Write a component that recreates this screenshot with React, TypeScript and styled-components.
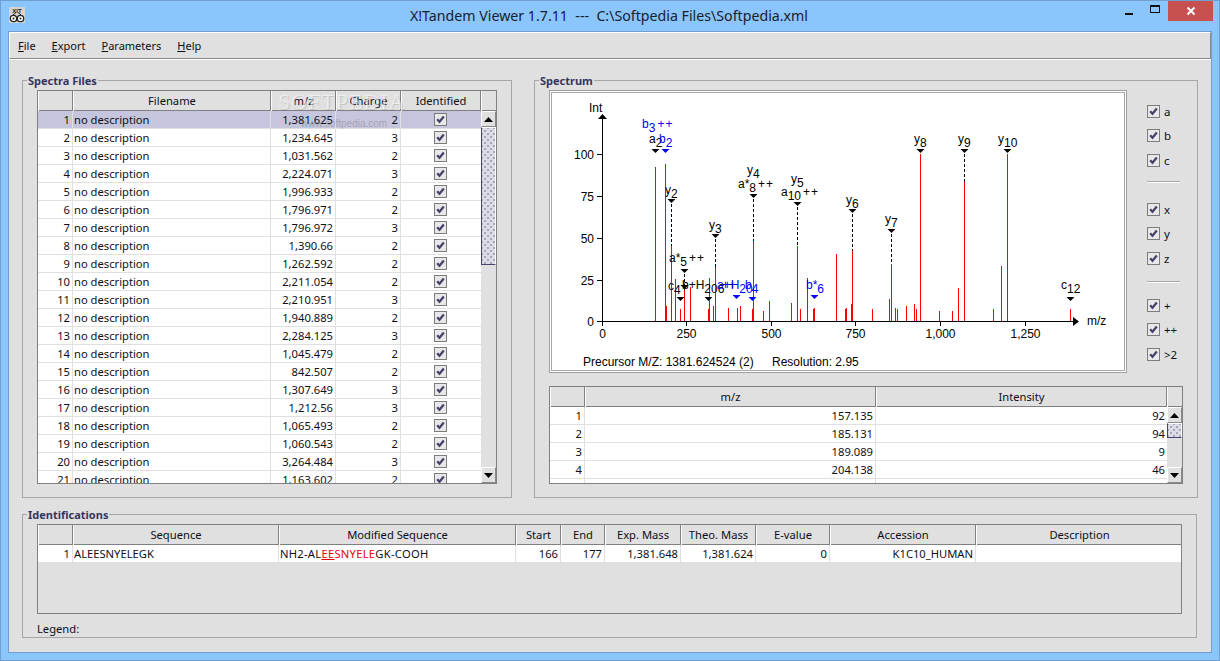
import styled, { createGlobalStyle } from "styled-components"

const GlobalStyle = createGlobalStyle`
  html, body {
    margin: 0;
    padding: 0;
    background: #8ac5fb;
    overflow: hidden;
  }
  * { box-sizing: border-box; }
`

const UI_FONT = `"Noto Sans", "Liberation Sans", sans-serif`
const CHART_FONT = `"Liberation Sans", Arial, sans-serif`

const Window = styled.div`
  width: 1220px;
  height: 661px;
  display: flex;
  flex-direction: column;
  background: #8ac5fb;
  border: 1px solid #6f9fd0;
  font-family: ${UI_FONT};
  font-size: 11.2px;
  color: #0e0e18;
`

const TitleBar = styled.div`
  height: 30px;
  flex: none;
  position: relative;
  display: flex;
  align-items: flex-start;
  justify-content: space-between;
  padding-left: 8px;
`

const AppIcon = styled.svg`
  width: 16px;
  height: 16px;
  margin-top: 6px;
`

const TitleText = styled.div`
  position: absolute;
  left: 0;
  right: 2px;
  top: 5px;
  text-align: center;
  font-size: 14.2px;
  line-height: 20px;
  color: #16222e;
  white-space: pre;
`

const WindowButtons = styled.div`
  display: flex;
  margin-right: 6px;
`

const WinButton = styled.div<{ $close?: boolean }>`
  width: ${({ $close }) => ($close ? "45px" : "26px")};
  height: 20px;
  display: flex;
  align-items: center;
  justify-content: center;
  background: ${({ $close }) => ($close ? "#c75050" : "transparent")};
`

const Client = styled.div`
  flex: 1;
  margin: 0 7px 7px 7px;
  display: flex;
  flex-direction: column;
  background: #e0e0e0;
  border: 1px solid #6f9fd0;
`

const MenuBar = styled.div`
  height: 27px;
  flex: none;
  display: flex;
  align-items: center;
  padding-left: 8px;
  gap: 16px;
  border-top: 1px solid #fff;
  border-left: 1px solid #fff;
  border-bottom: 1px solid #8a8a8a;
  border-right: 1px solid #8a8a8a;
  box-shadow: 0 1px 0 #fff;
  font-size: 11px;
  color: #0e0e18;

  u { text-underline-offset: 1px; }
`

const Content = styled.div`
  flex: 1;
  display: flex;
  flex-direction: column;
  gap: 16px;
  padding: 21px 14px 0 13px;
`

const TopRow = styled.div`
  display: flex;
  gap: 22px;
  height: 418px;
`

const Panel = styled.section<{ $width?: number }>`
  position: relative;
  ${({ $width }) => ($width ? `width: ${$width}px;` : "")}
  border: 1px solid #a6a6a6;
  padding: 9px 14px 0 14px;
`

const PanelTitle = styled.h2`
  position: absolute;
  left: 4px;
  top: -8px;
  margin: 0;
  padding: 0 1px;
  background: #e0e0e0;
  font-size: 11px;
  line-height: 15px;
  font-weight: 700;
  color: #35355f;
`

const TableFrame = styled.div<{ $height: number }>`
  position: relative;
  height: ${({ $height }) => $height}px;
  border: 1px solid #808080;
  overflow: hidden;
  display: flex;
  flex-direction: column;
`

const HeaderRow = styled.div<{ $cols: string }>`
  flex: none;
  height: 20px;
  display: grid;
  grid-template-columns: ${({ $cols }) => $cols};
  border-bottom: 1px solid #808080;
`

const HeaderCell = styled.div`
  text-align: center;
  line-height: 20px;
  white-space: nowrap;
  border-left: 1px solid #fff;
  border-right: 1px solid #808080;

  &:last-child { border-right: none; }
`

const TableBody = styled.div`
  flex: 1;
  min-height: 0;
  display: flex;
`

const Rows = styled.div`
  flex: 1;
  min-width: 0;
  overflow: hidden;
`

const Row = styled.div<{ $cols: string; $selected?: boolean }>`
  height: 18px;
  display: grid;
  grid-template-columns: ${({ $cols }) => $cols};
  background: ${({ $selected }) => ($selected ? "#c5c5dd" : "#fff")};
  border-bottom: 1px solid #e0e0e0;
`

const Cell = styled.div<{ $align?: string }>`
  padding: 0 2px 0 1px;
  line-height: 17px;
  white-space: nowrap;
  overflow: hidden;
  text-align: ${({ $align }) => $align || "right"};
  border-right: 1px solid #e0e0e0;
  display: ${({ $align }) => ($align === "center" ? "flex" : "block")};
  justify-content: center;
  align-items: center;

  &:last-child { border-right: none; }
`

const CheckCell = styled(Cell)`
  padding: 0 2px 0 0;
`

const SequenceCell = styled(Cell)`
  letter-spacing: 0.27px;
`

const ScrollBar = styled.div`
  width: 15px;
  flex: none;
  display: flex;
  flex-direction: column;
  background: #e0e0e0;
`

const ScrollArrow = styled.div`
  height: 16px;
  flex: none;
  display: flex;
  align-items: center;
  justify-content: center;
  border-top: 1px solid #fff;
  border-left: 1px solid #fff;
  border-right: 1px solid #8a8a8a;
  border-bottom: 1px solid #8a8a8a;
`

const ScrollThumb = styled.div<{ $height: number }>`
  height: ${({ $height }) => $height}px;
  flex: none;
  border-left: 1px solid #44446e;
  border-bottom: 1px solid #44446e;
  border-top: 1px solid #fff;
  border-right: 1px solid #fff;
  background-color: #dcdce6;
  background-image:
    radial-gradient(circle, #6a6a88 0.6px, transparent 0.8px),
    radial-gradient(circle, #6a6a88 0.6px, transparent 0.8px);
  background-size: 6px 6px;
  background-position: 0 0, 3px 3px;
`

const ScrollSpace = styled.div`
  flex: 1;
`

const CheckBox = styled.span`
  width: 13px;
  height: 13px;
  flex: none;
  display: inline-flex;
  align-items: center;
  justify-content: center;
  background: #e8e8e8;
  border: 1px solid #7c7c7c;
`

const Watermark = styled.div`
  position: absolute;
  left: 240px;
  top: 1px;
  font-family: "Liberation Serif", serif;
  font-size: 22px;
  line-height: 20px;
  letter-spacing: 1px;
  color: rgba(255, 255, 255, 0.5);
  text-shadow: 1px 1px 0 rgba(130, 130, 130, 0.3);
  pointer-events: none;
`

const WatermarkUrl = styled.div`
  position: absolute;
  left: 263px;
  top: 27px;
  font-family: ${CHART_FONT};
  font-size: 10px;
  line-height: 12px;
  color: rgba(120, 120, 120, 0.45);
  pointer-events: none;
`

const SpectrumColumn = styled.div`
  display: flex;
  flex-direction: column;
  gap: 13px;
`

const ChartRow = styled.div`
  display: flex;
  gap: 20px;
`

const ChartBox = styled.div`
  width: 578px;
  height: 283px;
  flex: none;
  background: #fff;
  border: 1px solid #a0a0a0;
  box-shadow: inset 0 0 0 1px #fff, inset 0 0 0 2px #a8a8a8;
`

const ChartSvg = styled.svg`
  display: block;
  width: 576px;
  height: 281px;
`

const ChartText = styled.text<{ $color?: string; $anchor?: string }>`
  font-family: ${CHART_FONT};
  font-size: 12px;
  fill: ${({ $color }) => $color || "#000"};
  text-anchor: ${({ $anchor }) => $anchor || "start"};
`

const Options = styled.div`
  display: flex;
  flex-direction: column;
  width: 33px;
  padding-top: 9px;
`

const Option = styled.label`
  height: 24.5px;
  display: flex;
  align-items: center;
  gap: 4px;
  font-size: 11.5px;
`

const OptionRule = styled.div<{ $above: number; $below: number }>`
  height: 2px;
  margin: ${({ $above, $below }) => `${$above}px 0 ${$below}px`};
  border-top: 1px solid #a8a8a8;
  border-bottom: 1px solid #fff;
`

const SeqRed = styled.span`
  color: #e8000c;
`

const SeqFixed = styled.span`
  color: #e8000c;
  text-decoration: underline;
`

const LegendLine = styled.div`
  margin-top: 7px;
  line-height: 16px;
`

const IdBody = styled.div`
  flex: 1;
  background: #e0e0e0;
`

const Check = () => (
  <CheckBox>
    <svg width="9" height="9" viewBox="0 0 9 9">
      <path d="M1.2 4.2 L3.5 6.8 L7.8 1.6" fill="none" stroke="#43436b" strokeWidth="2.3" />
    </svg>
  </CheckBox>
)

const Arrow = ({ up }: { up?: boolean }) => (
  <ScrollArrow>
    <svg width="9" height="5" viewBox="0 0 9 5">
      <path d={up ? "M0 5 L4.5 0 L9 5 Z" : "M0 0 L4.5 5 L9 0 Z"} fill="#000" />
    </svg>
  </ScrollArrow>
)

const spectra: [string, number][] = [
  ["1,381.625", 2], ["1,234.645", 3], ["1,031.562", 2], ["2,224.071", 3], ["1,996.933", 2],
  ["1,796.971", 2], ["1,796.972", 3], ["1,390.66", 2], ["1,262.592", 2], ["2,211.054", 2],
  ["2,210.951", 3], ["1,940.889", 2], ["2,284.125", 3], ["1,045.479", 2], ["842.507", 2],
  ["1,307.649", 3], ["1,212.56", 3], ["1,065.493", 2], ["1,060.543", 2], ["3,264.484", 3],
  ["1,163.602", 2],
]

const peaksList: [string, string][] = [
  ["157.135", "92"], ["185.131", "94"], ["189.089", "9"], ["204.138", "46"], ["", ""],
]

const idHeaders = ["", "Sequence", "Modified Sequence", "Start", "End", "Exp. Mass", "Theo. Mass", "E-value", "Accession", "Description"]

// x, top of the red peak (page coordinates, the axis is at y=321)
const peaks: [number, number][] = [
  [655, 167], [665, 164], [666, 306], [671, 246], [675, 279], [680, 309], [684, 290], [690, 287],
  [708, 309], [709, 309], [713, 306], [709, 278], [715, 267], [728, 308], [737, 308], [740, 306],
  [752, 309], [753, 241], [763, 311], [769, 301], [791, 303], [797, 246], [800, 309], [807, 278],
  [813, 309], [814, 308], [836, 254], [845, 309], [846, 308], [851, 304], [852, 251], [872, 309],
  [889, 299], [891, 264], [895, 308], [897, 309], [906, 306], [914, 304], [916, 309], [920, 154],
  [939, 311], [952, 311], [958, 288], [964, 182], [993, 309], [1001, 266], [1007, 154], [1070, 309],
]

const dashes: [number, number, number][] = [
  [671, 204, 246], [684, 274, 290], [715, 239, 267], [753, 199, 241], [797, 207, 246],
  [852, 214, 251], [891, 234, 264], [964, 154, 182],
]

const BLUE = "#0000ff"

const markers: [number, number, string?][] = [
  [655, 151], [665, 151, BLUE], [671, 201], [684, 271], [684, 287], [680, 299], [708, 299],
  [715, 236], [736, 297, BLUE], [752, 299, BLUE], [753, 196], [797, 204], [814, 297, BLUE],
  [852, 211], [891, 231], [920, 151], [964, 151], [1007, 151], [1070, 299],
]

type Ion = { x: number; y: number; t: string; sub?: string; sup?: string; color?: string }

const ions: Ion[] = [
  { x: 642, y: 128, t: "b", sub: "3", sup: "++", color: BLUE },
  { x: 649, y: 143, t: "a", sub: "2" },
  { x: 659, y: 143, t: "b", sub: "2", color: BLUE },
  { x: 665, y: 194, t: "y", sub: "2" },
  { x: 669, y: 262, t: "a*", sub: "5", sup: "++" },
  { x: 668, y: 290, t: "c", sub: "4" },
  { x: 682, y: 289, t: "b+H", sub: "206" },
  { x: 722, y: 289, t: "++" },
  { x: 717, y: 289, t: "a+H", sub: "20", color: BLUE },
  { x: 745, y: 289, t: "b", sub: "4", color: BLUE },
  { x: 806, y: 289, t: "b*", sub: "6", color: BLUE },
  { x: 709, y: 229, t: "y", sub: "3" },
  { x: 747, y: 174, t: "y", sub: "4" },
  { x: 738, y: 188, t: "a*", sub: "8", sup: "++" },
  { x: 791, y: 183, t: "y", sub: "5" },
  { x: 781, y: 196, t: "a", sub: "10", sup: "++" },
  { x: 846, y: 204, t: "y", sub: "6" },
  { x: 885, y: 223, t: "y", sub: "7" },
  { x: 914, y: 143, t: "y", sub: "8" },
  { x: 958, y: 143, t: "y", sub: "9" },
  { x: 998, y: 143, t: "y", sub: "10" },
  { x: 1061, y: 289, t: "c", sub: "12" },
]

const xTicks: [number, string][] = [[602, "0"], [686, "250"], [771, "500"], [855, "750"], [940, "1,000"], [1025, "1,250"]]
const yTicks: [number, string][] = [[154, "100"], [196, "75"], [238, "50"], [280, "25"], [321, "0"]]

function Spectrum() {
  return (
    <ChartSvg viewBox="550 91 576 281">
      {peaks.map(([x, top], i) => (
        <line key={i} x1={x + 0.5} x2={x + 0.5} y1={top} y2={321} stroke="#f00" strokeWidth="1" shapeRendering="crispEdges" />
      ))}
      {dashes.map(([x, y1, y2], i) => (
        <line key={i} x1={x + 0.5} x2={x + 0.5} y1={y1} y2={y2} stroke="#000" strokeDasharray="3 2" shapeRendering="crispEdges" />
      ))}
      <path d="M602.5 118 V321.5 H1074" fill="none" stroke="#000" shapeRendering="crispEdges" />
      <path d="M598 119 L602.5 114 L607 119 Z M1073 317 L1079 321.5 L1073 326 Z" fill="#000" />
      {xTicks.map(([x, label]) => (
        <g key={label}>
          <line x1={x + 0.5} x2={x + 0.5} y1={321} y2={326} stroke="#000" shapeRendering="crispEdges" />
          <ChartText x={x + 0.5} y={338} $anchor="middle">{label}</ChartText>
        </g>
      ))}
      {yTicks.map(([y, label]) => (
        <g key={label}>
          <line x1={597} x2={602} y1={y + 0.5} y2={y + 0.5} stroke="#000" shapeRendering="crispEdges" />
          <ChartText x={594} y={y + 5} $anchor="end">{label}</ChartText>
        </g>
      ))}
      {markers.map(([x, y, color], i) => (
        <path key={i} d={`M${x - 3.5} ${y - 2} H${x + 4.5} L${x + 0.5} ${y + 2} Z`} fill={color || "#000"} />
      ))}
      {ions.map((ion, i) => (
        <ChartText key={i} x={ion.x} y={ion.y} $color={ion.color}>
          {ion.t}
          {ion.sub && <tspan dy="4">{ion.sub}</tspan>}
          {ion.sup && <tspan dy="-4" dx="2" letterSpacing="1">{ion.sup}</tspan>}
        </ChartText>
      ))}
      <ChartText x={589} y={112}>Int</ChartText>
      <ChartText x={1087} y={325}>m/z</ChartText>
      <ChartText x={583} y={366}>Precursor M/Z: 1381.624524 (2)</ChartText>
      <ChartText x={772} y={366}>Resolution: 2.95</ChartText>
    </ChartSvg>
  )
}

export default function App() {
  const filesCols = "35px 198px 65px 65px 80px"
  const peakCols = "35px 291px 291px"
  const idCols = "35px 206px 237px 45px 44px 76px 75px 74px 146px 206px"

  return (
    <Window>
      <GlobalStyle />
      <TitleBar>
        <AppIcon viewBox="0 0 16 16">
          <rect width="16" height="16" rx="1" fill="#d4d4d4" />
          <text x="8" y="6" fontSize="6" fontFamily={CHART_FONT} textAnchor="middle" fontWeight="700" fill="#222">XIT</text>
          <circle cx="4.5" cy="11.5" r="3.2" fill="#fff" stroke="#222" strokeWidth="1.3" />
          <circle cx="11.5" cy="11.5" r="3.2" fill="#fff" stroke="#222" strokeWidth="1.3" />
          <circle cx="4.5" cy="11.5" r="1" fill="#222" />
          <circle cx="11.5" cy="11.5" r="1" fill="#222" />
          <path d="M4 8 L7 5.5 M12 8 L9 5.5" stroke="#222" strokeWidth="1" />
        </AppIcon>
        <TitleText>{"X!Tandem Viewer 1.7.11  ---  C:\\Softpedia Files\\Softpedia.xml"}</TitleText>
        <WindowButtons>
          <WinButton>
            <svg width="9" height="12" viewBox="0 0 9 12"><rect x="0" y="8" width="8" height="2" fill="#111" /></svg>
          </WinButton>
          <WinButton>
            <svg width="11" height="9" viewBox="0 0 11 9" style={{ marginTop: -3 }}>
              <rect x="0.5" y="0.5" width="9" height="7" fill="none" stroke="#111" />
              <rect x="0" y="0" width="10" height="2" fill="#111" />
            </svg>
          </WinButton>
          <WinButton $close>
            <svg width="10" height="10" viewBox="0 0 10 10"><path d="M1.5 1.5 L8.5 8.5 M8.5 1.5 L1.5 8.5" stroke="#fff" strokeWidth="2" /></svg>
          </WinButton>
        </WindowButtons>
      </TitleBar>

      <Client>
        <MenuBar>
          <span><u>F</u>ile</span>
          <span><u>E</u>xport</span>
          <span><u>P</u>arameters</span>
          <span><u>H</u>elp</span>
        </MenuBar>

        <Content>
          <TopRow>
            <Panel $width={490}>
              <PanelTitle>Spectra Files</PanelTitle>
              <TableFrame $height={394}>
                <HeaderRow $cols={`${filesCols} 15px`}>
                  {["", "Filename", "m/z", "Charge", "Identified", ""].map((h, i) => (
                    <HeaderCell key={i}>{h}</HeaderCell>
                  ))}
                </HeaderRow>
                <TableBody>
                  <Rows>
                    {spectra.map(([mz, charge], i) => (
                      <Row key={i} $cols={filesCols} $selected={i === 0}>
                        <Cell>{i + 1}</Cell>
                        <Cell $align="left">no description</Cell>
                        <Cell>{mz}</Cell>
                        <Cell>{charge}</Cell>
                        <CheckCell $align="center"><Check /></CheckCell>
                      </Row>
                    ))}
                  </Rows>
                  <ScrollBar>
                    <Arrow up />
                    <ScrollThumb $height={138} />
                    <ScrollSpace />
                    <Arrow />
                  </ScrollBar>
                </TableBody>
                <Watermark>SOFTPEDIA</Watermark>
                <WatermarkUrl>www.softpedia.com</WatermarkUrl>
              </TableFrame>
            </Panel>

            <Panel $width={664}>
              <PanelTitle>Spectrum</PanelTitle>
              <SpectrumColumn>
                <ChartRow>
                  <ChartBox>
                    <Spectrum />
                  </ChartBox>
                  <Options>
                    <Option><Check />a</Option>
                    <Option><Check />b</Option>
                    <Option><Check />c</Option>
                    <OptionRule $above={8.5} $below={14} />
                    <Option><Check />x</Option>
                    <Option><Check />y</Option>
                    <Option><Check />z</Option>
                    <OptionRule $above={10} $below={10.5} />
                    <Option><Check />+</Option>
                    <Option><Check />++</Option>
                    <Option><Check />&gt;2</Option>
                  </Options>
                </ChartRow>
                <TableFrame $height={98}>
                  <HeaderRow $cols={`${peakCols} 15px`}>
                    {["", "m/z", "Intensity", ""].map((h, i) => (
                      <HeaderCell key={i}>{h}</HeaderCell>
                    ))}
                  </HeaderRow>
                  <TableBody>
                    <Rows>
                      {peaksList.map(([mz, intensity], i) => (
                        <Row key={i} $cols={peakCols}>
                          <Cell>{mz && i + 1}</Cell>
                          <Cell>{mz}</Cell>
                          <Cell>{intensity}</Cell>
                        </Row>
                      ))}
                    </Rows>
                    <ScrollBar>
                      <Arrow up />
                      <ScrollThumb $height={15} />
                      <ScrollSpace />
                      <Arrow />
                    </ScrollBar>
                  </TableBody>
                </TableFrame>
              </SpectrumColumn>
            </Panel>
          </TopRow>

          <Panel>
            <PanelTitle>Identifications</PanelTitle>
            <TableFrame $height={90}>
              <HeaderRow $cols={idCols}>
                {idHeaders.map((h, i) => (
                  <HeaderCell key={i}>{h}</HeaderCell>
                ))}
              </HeaderRow>
              <Row $cols={idCols}>
                <Cell>1</Cell>
                <Cell $align="left">ALEESNYELEGK</Cell>
                <SequenceCell $align="left">
                  NH2-AL<SeqFixed>EE</SeqFixed><SeqRed>SNYELE</SeqRed>GK-COOH
                </SequenceCell>
                <Cell>166</Cell>
                <Cell>177</Cell>
                <Cell>1,381.648</Cell>
                <Cell>1,381.624</Cell>
                <Cell>0</Cell>
                <Cell>K1C10_HUMAN</Cell>
                <Cell />
              </Row>
              <IdBody />
            </TableFrame>
            <LegendLine>Legend:</LegendLine>
          </Panel>
        </Content>
      </Client>
    </Window>
  )
}
